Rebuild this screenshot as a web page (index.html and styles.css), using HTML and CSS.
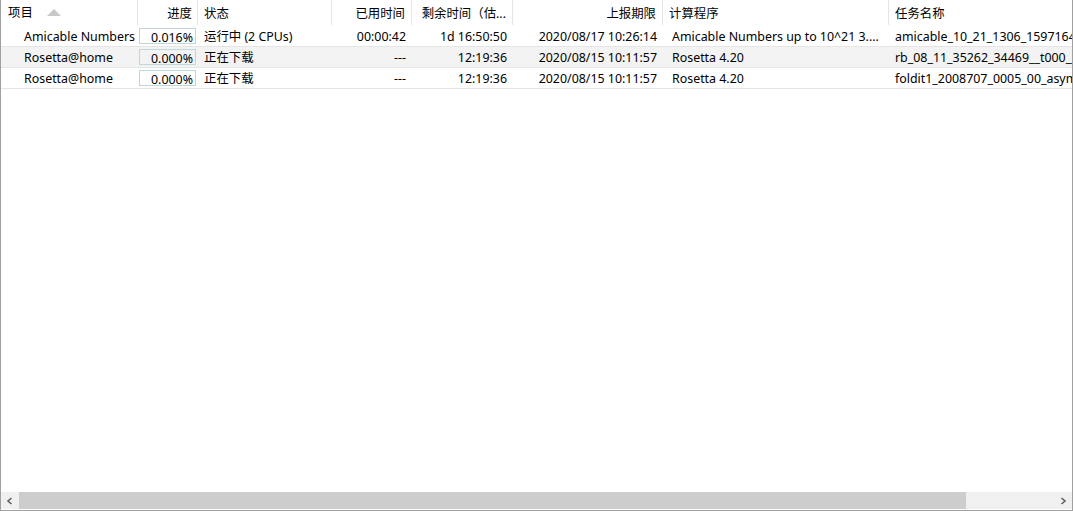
FILE: index.html
```html
<!DOCTYPE html>
<html lang="zh-CN">
<head>
    <meta charset="UTF-8">
    <title>任务</title>
    <link rel="stylesheet" href="styles.css">
</head>
<body>
    <div class="window">
        <div class="list">
            <div class="row head">
                <div class="cell c1">项目 <span class="sort"></span></div>
                <div class="cell c2 r">进度</div>
                <div class="cell c3">状态</div>
                <div class="cell c4 r">已用时间</div>
                <div class="cell c5 r">剩余时间（估...</div>
                <div class="cell c6 r">上报期限</div>
                <div class="cell c7">计算程序</div>
                <div class="cell c8">任务名称</div>
            </div>
            <div class="row">
                <div class="cell c1 proj">Amicable Numbers</div>
                <div class="cell c2"><span class="prog">0.016%</span></div>
                <div class="cell c3">运行中 (2 CPUs)</div>
                <div class="cell c4 r">00:00:42</div>
                <div class="cell c5 r">1d 16:50:50</div>
                <div class="cell c6 r">2020/08/17 10:26:14</div>
                <div class="cell c7">Amicable Numbers up to 10^21 3....</div>
                <div class="cell c8">amicable_10_21_1306_1597164</div>
            </div>
            <div class="row alt">
                <div class="cell c1 proj">Rosetta@home</div>
                <div class="cell c2"><span class="prog">0.000%</span></div>
                <div class="cell c3">正在下载</div>
                <div class="cell c4 r">---</div>
                <div class="cell c5 r">12:19:36</div>
                <div class="cell c6 r">2020/08/15 10:11:57</div>
                <div class="cell c7">Rosetta 4.20</div>
                <div class="cell c8">rb_08_11_35262_34469__t000__0</div>
            </div>
            <div class="row">
                <div class="cell c1 proj">Rosetta@home</div>
                <div class="cell c2"><span class="prog">0.000%</span></div>
                <div class="cell c3">正在下载</div>
                <div class="cell c4 r">---</div>
                <div class="cell c5 r">12:19:36</div>
                <div class="cell c6 r">2020/08/15 10:11:57</div>
                <div class="cell c7">Rosetta 4.20</div>
                <div class="cell c8">foldit1_2008707_0005_00_asymm</div>
            </div>
        </div>
        <div class="hscroll">
            <div class="arrow">
                <svg width="8" height="8" viewBox="0 0 8 8"><path d="M5.5 1 L2 4 L5.5 7" fill="none" stroke="#606060" stroke-width="1.6"/></svg>
            </div>
            <div class="track"><div class="thumb"></div></div>
            <div class="arrow">
                <svg width="8" height="8" viewBox="0 0 8 8"><path d="M2.5 1 L6 4 L2.5 7" fill="none" stroke="#606060" stroke-width="1.6"/></svg>
            </div>
        </div>
    </div>
</body>
</html>
```

FILE: styles.css
```css
body {
    margin: 0;
    font-family: "Noto Sans", "Noto Sans CJK SC", sans-serif;
    font-size: 12.4px;
    color: #000;
    background: #fff;
}
.window {
    width: 1073px;
    height: 511px;
    box-sizing: border-box;
    border: 1px solid #a0a0a0;
    border-top: none;
    display: flex;
    flex-direction: column;
    overflow: hidden;
}
.list {
    flex: 1;
    overflow: hidden;
}
.row {
    display: grid;
    grid-template-columns: 137px 60px 134px 80px 101px 150px 226px 200px;
    height: 20px;
    border-bottom: 1px solid #e5e5e5;
    white-space: nowrap;
}
.row.alt {
    background: #f3f3f3;
}
.row.head {
    height: 26px;
    border-bottom: none;
}
.cell {
    overflow: hidden;
    text-overflow: clip;
    padding: 0 6px;
    line-height: 22px;
}
.head .cell {
    line-height: 27px;
    height: 25px;
    border-right: 1px solid #e5e5e5;
}
.r {
    text-align: right;
}
.head .c1 {
    padding-left: 7px;
    display: flex;
    align-items: center;
    gap: 14px;
}
.sort {
    width: 0;
    height: 0;
    border-left: 7px solid transparent;
    border-right: 7px solid transparent;
    border-bottom: 7px solid #c8c8c8;
}
.proj {
    padding-left: 23px;
    padding-right: 0;
}
.c2 {
    padding: 0 2px 0 1px;
    display: flex;
    align-items: center;
}
.head .c2 {
    display: block;
    padding-right: 5px;
}
.prog {
    display: block;
    width: 100%;
    height: 16px;
    line-height: 17px;
    box-sizing: border-box;
    border: 1px solid #bcd8d8;
    text-align: right;
    padding-right: 2px;
}
.row .c7 {
    padding-left: 9px;
}
.head .c7 {
    padding-left: 6px;
}
.head .c8,
.row .c8 {
    border-right: none;
}
.hscroll {
    height: 17px;
    margin-bottom: 1px;
    display: flex;
    background: #f0f0f0;
}
.arrow {
    width: 18px;
    display: flex;
    align-items: center;
    justify-content: center;
}
.track {
    flex: 1;
    display: flex;
}
.thumb {
    width: 947px;
    background: #cdcdcd;
}
```
